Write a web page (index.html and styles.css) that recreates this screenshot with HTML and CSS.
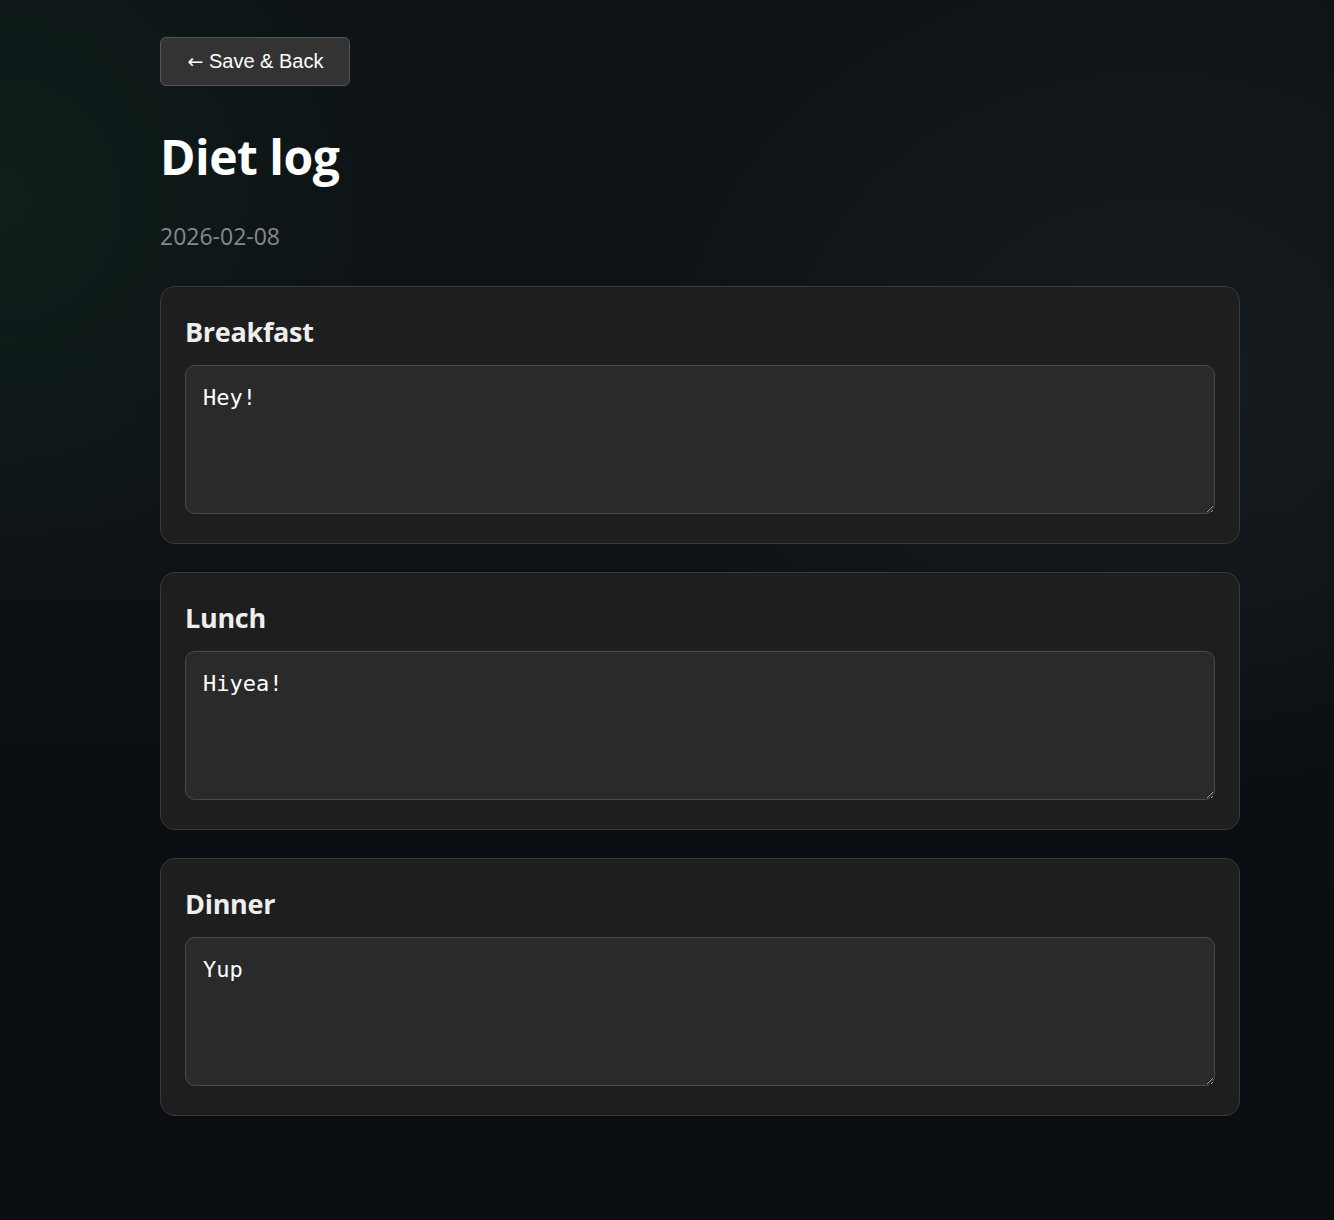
FILE: index.html
```html
<!DOCTYPE html>
<html lang="en">
<head>
<meta charset="utf-8">
<title>Diet log</title>
<link rel="stylesheet" href="styles.css">
</head>
<body>
<main class="page">
  <button class="back-btn" type="button"><span class="arrow">←</span> Save &amp; Back</button>
  <h1 class="title">Diet log</h1>
  <p class="date">2026-02-08</p>
  <section class="meal">
    <h3 class="meal-title">Breakfast</h3>
    <textarea class="meal-input">Hey!</textarea>
  </section>
  <section class="meal">
    <h3 class="meal-title">Lunch</h3>
    <textarea class="meal-input">Hiyea!</textarea>
  </section>
  <section class="meal">
    <h3 class="meal-title">Dinner</h3>
    <textarea class="meal-input">Yup</textarea>
  </section>
</main>
</body>
</html>
```
FILE: styles.css
```css
html, body {
  margin: 0;
  padding: 0;
}
body {
  min-height: 1220px;
  background:
    radial-gradient(ellipse 700px 600px at 1150px 380px, rgba(30, 34, 40, 0.55), rgba(30, 34, 40, 0) 70%),
    radial-gradient(ellipse 520px 520px at 0px 200px, rgba(16, 40, 30, 0.55), rgba(16, 40, 30, 0) 70%),
    linear-gradient(180deg, #0d1316 0%, #0e1317 40%, #0a0d12 75%, #0a0d12 100%);
  color: #fff;
  font-family: "Open Sans", "Noto Sans", sans-serif;
}
.page {
  width: 1080px;
  padding: 37px 0 60px 160px;
  display: flex;
  flex-direction: column;
  align-items: flex-start;
}
.back-btn {
  width: 190px;
  height: 49px;
  padding: 0 0 0 1px;
  background: #333333;
  border: 1px solid #555555;
  border-radius: 6px;
  color: #ffffff;
  font-family: "Liberation Sans", Arial, sans-serif;
  font-size: 20px;
  cursor: pointer;
}
.arrow {
  font-family: "DejaVu Sans", sans-serif;
  font-size: 19px;
}
.title {
  margin: 39px 0 0;
  font-size: 48px;
  font-weight: 700;
  line-height: 64px;
  color: #ffffff;
  letter-spacing: -0.5px;
}
.date {
  margin: 31px 0 0;
  font-size: 23px;
  line-height: 32px;
  color: #888888;
}
.meal {
  box-sizing: border-box;
  width: 1080px;
  height: 258px;
  margin-top: 28px;
  padding: 24px;
  background: #1e1e1e;
  border: 1px solid #3a3a3a;
  border-radius: 15px;
  display: flex;
  flex-direction: column;
}
.meal:first-of-type {
  margin-top: 34px;
}
.meal-title {
  margin: 2px 0 14px;
  font-size: 27px;
  font-weight: 700;
  line-height: 38px;
  color: #eeeeee;
  letter-spacing: -0.3px;
}
.meal-input {
  box-sizing: border-box;
  width: 1030px;
  height: 149px;
  padding: 17px 16px 15px 17px;
  background: #2a2a2a;
  border: 1px solid #4a4a4a;
  border-radius: 10px;
  color: #ffffff;
  font-family: "DejaVu Sans Mono", "Liberation Mono", monospace;
  font-size: 22px;
  line-height: 30px;
  resize: vertical;
  outline: none;
}
```
